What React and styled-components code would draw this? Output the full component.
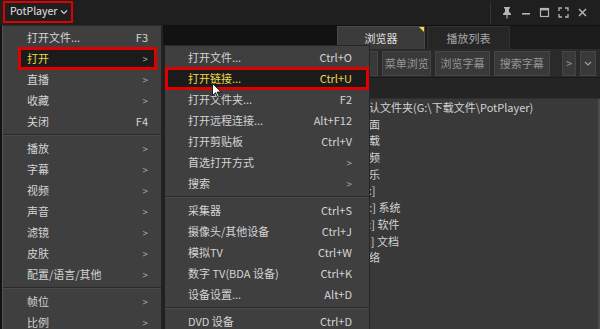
import React from "react";
import styled, { createGlobalStyle } from "styled-components";

const GlobalStyle = createGlobalStyle`
  html, body {
    margin: 0;
    padding: 0;
    background: #141414;
    overflow: hidden;
  }
  * {
    box-sizing: border-box;
  }
`;

const mainItems = [
    {label: "打开文件...", key: "F3"},
    {label: "打开", sub: true, active: true},
    {label: "直播", sub: true},
    {label: "收藏", sub: true},
    {label: "关闭", key: "F4"},
    {sep: true},
    {label: "播放", sub: true},
    {label: "字幕", sub: true},
    {label: "视频", sub: true},
    {label: "声音", sub: true},
    {label: "滤镜", sub: true},
    {label: "皮肤", sub: true},
    {label: "配置/语言/其他", sub: true},
    {sep: true},
    {label: "帧位", sub: true},
    {label: "比例", sub: true},
];

const openItems = [
    {label: "打开文件...", key: "Ctrl+O"},
    {label: "打开链接...", key: "Ctrl+U", active: true},
    {label: "打开文件夹...", key: "F2"},
    {label: "打开远程连接...", key: "Alt+F12"},
    {label: "打开剪贴板", key: "Ctrl+V"},
    {label: "首选打开方式", sub: true},
    {label: "搜索", sub: true},
    {sep: true},
    {label: "采集器", key: "Ctrl+S"},
    {label: "摄像头/其他设备", key: "Ctrl+J"},
    {label: "模拟TV", key: "Ctrl+W"},
    {label: "数字 TV(BDA 设备)", key: "Ctrl+K"},
    {label: "设备设置...", key: "Alt+D"},
    {sep: true},
    {label: "DVD 设备", key: "Ctrl+D"},
];

const files = [
    "默认文件夹(G:\\下载文件\\PotPlayer)",
    "桌面",
    "下载",
    "视频",
    "音乐",
    "[C:]",
    "[D:] 系统",
    "[E:] 软件",
    "[F:] 文档",
    "网络",
];

const MenuList = ({items, sub}) => (
    <>
        {items.map((item, i) =>
            item.sep ? (
                <Separator key={i}/>
            ) : (
                <MenuRow key={i} sub={sub} active={item.active}>
                    <span>{item.label}</span>
                    {item.sub ? <Arrow>&gt;</Arrow> : <Shortcut>{item.key}</Shortcut>}
                </MenuRow>
            )
        )}
    </>
);

const App = () => {
    return (
        <>
            <GlobalStyle/>
            <Window>
                <TitleBar>
                    <Brand>
                        PotPlayer
                        <svg width="8" height="6" viewBox="0 0 8 6">
                            <path d="M1 1.5l3 3 3-3" fill="none" stroke="#d0d0d0" strokeWidth="1.2"/>
                        </svg>
                    </Brand>
                    <TitleDivider/>
                    <WinButtons>
                        <svg width="12" height="13" viewBox="0 0 12 13">
                            <path d="M3 1h6v1.6H8v3.2l2 2v1.2H2V7.8l2-2V2.6H3z" fill="#b4b4b4"/>
                            <rect x="5.4" y="9" width="1.2" height="3.5" fill="#b4b4b4"/>
                        </svg>
                        <svg width="10" height="12" viewBox="0 0 10 12">
                            <rect x="1" y="6" width="8" height="1.6" fill="#b4b4b4"/>
                        </svg>
                        <svg width="11" height="11" viewBox="0 0 11 11">
                            <rect x="1.5" y="1.5" width="8" height="8" fill="none" stroke="#b4b4b4" strokeWidth="1.2"/>
                            <rect x="1" y="1" width="9" height="2.4" fill="#b4b4b4"/>
                        </svg>
                        <svg width="11" height="11" viewBox="0 0 11 11">
                            <path d="M1 4V1h3M7 1h3v3M10 7v3H7M4 10H1V7" fill="none" stroke="#b4b4b4" strokeWidth="1.3"/>
                        </svg>
                        <svg width="11" height="11" viewBox="0 0 11 11">
                            <path d="M2 2l7 7M9 2l-7 7" stroke="#b4b4b4" strokeWidth="1.5"/>
                        </svg>
                    </WinButtons>
                </TitleBar>

                <Body>
                    <Stage/>
                    <SidePanel>
                        <TabRow>
                            <Tab active>浏览器</Tab>
                            <Tab>播放列表</Tab>
                        </TabRow>
                        <Toolbar>
                            <ToolButton width={38}>收藏</ToolButton>
                            <ToolButton width={50}>菜单浏览</ToolButton>
                            <ToolButton width={56}>浏览字幕</ToolButton>
                            <ToolButton width={57}>搜索字幕</ToolButton>
                            <ToolSpacer/>
                            <ToolButton width={15}>&gt;</ToolButton>
                            <ToolButton width={16}>
                                <svg width="8" height="5" viewBox="0 0 8 5">
                                    <path d="M1 1l3 3 3-3" fill="none" stroke="#a0a0a0" strokeWidth="1.2"/>
                                </svg>
                            </ToolButton>
                        </Toolbar>
                        <PathBar/>
                        <FileList>
                            {files.map((f) => (
                                <FileRow key={f}>{f}</FileRow>
                            ))}
                        </FileList>
                    </SidePanel>
                </Body>

                <MainMenu>
                    <MenuList items={mainItems}/>
                </MainMenu>
                <SubMenu>
                    <MenuList items={openItems} sub/>
                </SubMenu>

                <Cursor width="10" height="15" viewBox="0 0 10 15">
                    <path d="M0.5 0.5v12l3-2.8 2.2 4.6 1.6-0.8-2.2-4.5h4.1z" fill="#fff" stroke="#111" strokeWidth="0.9"/>
                </Cursor>
            </Window>
        </>
    );
};

export default App;

const font = `"Noto Sans CJK SC", "Liberation Sans", sans-serif`;

const Window = styled.div`
  position: relative;
  width: 600px;
  height: 329px;
  display: flex;
  flex-direction: column;
  overflow: hidden;
  font-family: ${font};
  font-size: 11px;
  color: #d4d4d4;
`;

const TitleBar = styled.div`
  height: 26px;
  flex-shrink: 0;
  display: flex;
  align-items: center;
  background: #1f1f1f;
  border-bottom: 1px solid #121212;
  padding: 0 0 0 3px;
`;

const Brand = styled.div`
  height: 22px;
  display: flex;
  align-items: center;
  gap: 3px;
  padding: 0 3px 0 5px;
  border: 2px solid #e10000;
  color: #e2e2e2;
  font-size: 10.5px;
  line-height: 1;
  margin-top: -2px;

  svg {
    display: block;
  }
`;

const TitleDivider = styled.div`
  margin-left: auto;
  width: 1px;
  height: 22px;
  background: #333;
`;

const WinButtons = styled.div`
  display: flex;
  align-items: center;
  gap: 8px;
  padding: 0 12px 0 10px;

  svg {
    display: block;
  }
`;

const Body = styled.div`
  flex: 1;
  display: flex;
  min-height: 0;
`;

const Stage = styled.div`
  flex: 1;
  background: #121212;
`;

const SidePanel = styled.div`
  width: 263px;
  display: flex;
  flex-direction: column;
  background: #1b1b1b;
`;

const TabRow = styled.div`
  height: 24px;
  display: flex;
  align-items: flex-end;
  gap: 2px;
  border-bottom: 1px solid #2c2c2c;
`;

const Tab = styled.div`
  position: relative;
  height: 23px;
  width: ${({active}) => (active ? "88px" : "83px")};
  display: flex;
  align-items: center;
  justify-content: center;
  background: ${({active}) => (active ? "#3b3b3b" : "#262626")};
  border: 1px solid ${({active}) => (active ? "#4a4a4a" : "#323232")};
  border-bottom: none;
  color: ${({active}) => (active ? "#e0e0e0" : "#a8a8a8")};
  line-height: 1;

  &::after {
    content: "";
    display: ${({active}) => (active ? "block" : "none")};
    position: absolute;
    top: 0;
    right: 0;
    border-top: 5px solid #f0dc3c;
    border-left: 5px solid transparent;
  }
`;

const Toolbar = styled.div`
  height: 27px;
  display: flex;
  align-items: center;
  gap: 4px;
  padding: 0 4px;
  background: #2a2a2a;
`;

const ToolButton = styled.div`
  width: ${({width}) => width}px;
  height: 25px;
  display: flex;
  align-items: center;
  justify-content: center;
  background: #393939;
  border: 1px solid #454545;
  color: #969696;
  line-height: 1;
`;

const ToolSpacer = styled.div`
  width: 4px;
`;

const PathBar = styled.div`
  height: 22px;
  background: #242424;
  border-top: 1px solid #1a1a1a;
  border-bottom: 1px solid #303030;
`;

const FileList = styled.div`
  flex: 1;
  background: #393939;
  border-right: 2px solid #4c4c4c;
  padding-left: 21px;
`;

const FileRow = styled.div`
  height: 16.7px;
  line-height: 16.7px;
  color: #d2d2d2;
  white-space: nowrap;
`;

const MainMenu = styled.div`
  position: absolute;
  left: 2px;
  top: 25px;
  width: 161px;
  height: 320px;
  background: #3f3f3f;
  border: 1px solid #2a2a2a;
  border-left-color: #555;
  border-right: 2px solid #222;
  padding-top: 1px;
`;

const SubMenu = styled.div`
  position: absolute;
  left: 163px;
  top: 45px;
  width: 207px;
  height: 300px;
  background: #3f3f3f;
  border: 1px solid #262626;
  border-left: 2px solid #202020;
  padding-top: 1px;
`;

const MenuRow = styled.div`
  height: 21px;
  display: flex;
  align-items: center;
  justify-content: space-between;
  margin: ${({sub}) => (sub ? "0 1px 0 1px" : "0 5px 0 16px")};
  padding: ${({sub}) => (sub ? "0 16px 0 22px" : "0 8px 0 8px")};
  line-height: 1;
  white-space: nowrap;
  color: ${({active}) => (active ? "#ecd84a" : "#d4d4d4")};
  background: ${({active}) => (active ? "#1b1b1b" : "transparent")};
  outline: ${({active}) => (active ? "3px solid #e10000" : "none")};
  outline-offset: -2px;
`;

const Shortcut = styled.span`
  color: inherit;
`;

const Arrow = styled.span`
  color: #a8a8a8;
  font-size: 10px;
`;

const Separator = styled.div`
  height: 6px;
  display: flex;
  flex-direction: column;
  justify-content: center;

  &::before {
    content: "";
    height: 1px;
    background: #2a2a2a;
    border-bottom: 1px solid #4a4a4a;
    box-sizing: content-box;
  }
`;

const Cursor = styled.svg`
  position: absolute;
  left: 212px;
  top: 83px;
`;
